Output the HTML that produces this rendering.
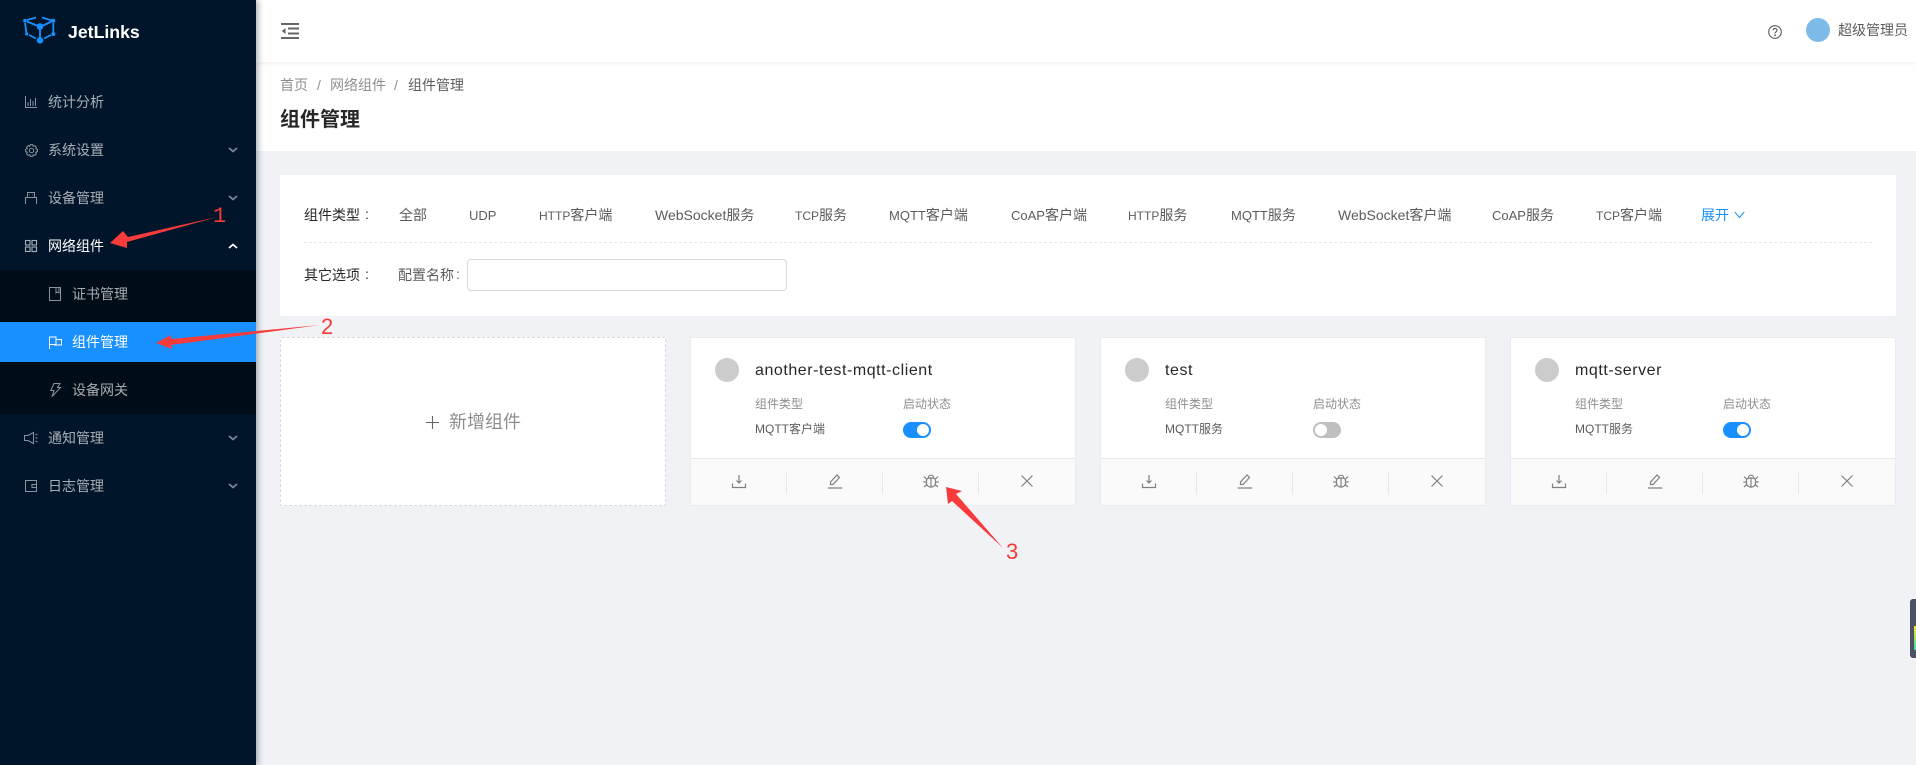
<!DOCTYPE html>
<html lang="zh-CN"><head><meta charset="utf-8"><title>JetLinks</title>
<style>
*{box-sizing:border-box}
html,body{margin:0;padding:0;width:1916px;height:765px;overflow:hidden;background:#f0f2f5;font-family:"Liberation Sans","Noto Sans CJK SC",sans-serif;font-size:14px;color:rgba(0,0,0,.65)}
.a{position:absolute}
.t{position:absolute;white-space:nowrap;line-height:20px;height:20px}
#side{position:absolute;left:0;top:0;width:256px;height:765px;background:#001529;box-shadow:2px 0 6px rgba(0,21,41,.35);z-index:3}
#side .t{color:rgba(255,255,255,.65)}
#side svg{position:absolute;overflow:visible}
.card{position:absolute;top:337px;width:386px;height:169px;background:#fff;border:1px solid #ececec;border-radius:2px}
.av{position:absolute;left:24px;top:20px;width:24px;height:24px;border-radius:50%;background:#ccc}
.name{position:absolute;left:64px;top:22px;font-size:16px;line-height:22px;letter-spacing:.55px;color:rgba(0,0,0,.85);white-space:nowrap}
.lb{position:absolute;top:56px;font-size:12px;line-height:20px;color:rgba(0,0,0,.45);white-space:nowrap}
.val{position:absolute;left:64px;top:81px;font-size:12px;line-height:20px;color:rgba(0,0,0,.65);white-space:nowrap}
.sw{position:absolute;left:212px;top:84px;width:28px;height:16px;border-radius:8px;background:#1890ff}
.sw:after{content:"";position:absolute;left:14px;top:2px;width:12px;height:12px;border-radius:50%;background:#fff}
.sw.off{background:#bfbfbf}.sw.off:after{left:2px}
.bar{position:absolute;left:0;right:0;bottom:0;height:47px;background:#fafafa;border-top:1px solid #e8e8e8}
.bar i{position:absolute;top:12px;width:1px;height:23px;background:#e8e8e8}
.bar svg{position:absolute;top:14px;width:16px;height:16px;fill:none;stroke:#808080;stroke-width:1.2}
.f{color:rgba(0,0,0,.65);font-size:14px;top:205px}
.f span{font-size:13px}
.f span.s12{font-size:12px}
.f span.s14{font-size:14px}
.l{color:rgba(0,0,0,.85);font-size:14px}
</style></head><body>

<div id="side">
  <svg style="left:0;top:0" width="60" height="48" viewBox="0 0 60 48" fill="none" stroke="#1890ff" stroke-width="1.8">
    <path d="M27 20L36 17.500M42 17.500L52 20.500M53.300 23V32M51 35L44 38.500M36 38.500L29 35M25 23L26.500 33M27 21.500L38 26M51.500 21.500L42 26M40 27V38"/>
    <g fill="#1890ff" stroke="none"><circle cx="40" cy="26.500" r="3.300"/><circle cx="40" cy="40.300" r="3.300"/><circle cx="53.300" cy="20.700" r="2"/><circle cx="25" cy="20.700" r="1.800"/><circle cx="53.300" cy="34" r="2"/><circle cx="26.700" cy="34" r="1.600"/></g>
  </svg>
  <div class="t" style="left:68px;top:21px;font-size:17.700px;line-height:22px;height:22px;color:#fff;font-weight:700">JetLinks</div>

  <svg style="left:25px;top:96px" width="12" height="12" viewBox="0 0 12 12" fill="none" stroke="#8b949e"><path d="M.5 0V11.500H12M3 10V6M5.500 10V3M8 10V5M10.500 10V2"/></svg>
  <div class="t" style="left:48px;top:92px">统计分析</div>

  <svg style="left:25px;top:144px" width="13" height="13" viewBox="0 0 13 13" fill="none" stroke="#8b949e"><circle cx="6.500" cy="6.500" r="2.200"/><path d="M5.300.6H7.700L8.200 2.300 9.800 1.600 11.400 3.200 10.700 4.800 12.400 5.300V7.700L10.700 8.200 11.400 9.800 9.800 11.400 8.200 10.700 7.700 12.400H5.300L4.800 10.700 3.200 11.400 1.600 9.800 2.300 8.200.6 7.700V5.300L2.300 4.800 1.600 3.200 3.200 1.600 4.800 2.300Z"/></svg>
  <div class="t" style="left:48px;top:140px">系统设置</div>
  <svg style="left:228px;top:147px" width="10" height="6" viewBox="0 0 10 6" fill="none" stroke="#7f8a96" stroke-width="1.700"><path d="M1 1L5 4.500 9 1"/></svg>

  <svg style="left:25px;top:192px" width="12" height="12" viewBox="0 0 12 12" fill="none" stroke="#8b949e"><path d="M2.500 5.500V.5H9.500V5.500M.5 12V5.500H11.500V12M4.500 2.500V3M7.500 2.500V3"/></svg>
  <div class="t" style="left:48px;top:188px">设备管理</div>
  <svg style="left:228px;top:195px" width="10" height="6" viewBox="0 0 10 6" fill="none" stroke="#7f8a96" stroke-width="1.700"><path d="M1 1L5 4.500 9 1"/></svg>

  <svg style="left:25px;top:240px" width="12" height="12" viewBox="0 0 12 12" fill="none" stroke="#a9b0b7" stroke-width="1.100"><rect x=".5" y=".5" width="4.500" height="4.500"/><rect x="7" y=".5" width="4.500" height="4.500"/><rect x=".5" y="7" width="4.500" height="4.500"/><rect x="7" y="7" width="4.500" height="4.500"/></svg>
  <div class="t" style="left:48px;top:236px;color:#fff">网络组件</div>
  <svg style="left:228px;top:243px" width="10" height="6" viewBox="0 0 10 6" fill="none" stroke="#fff" stroke-width="1.700"><path d="M1 5L5 1.500 9 5"/></svg>

  <div class="a" style="left:0;top:270px;width:256px;height:144px;background:#000c17"></div>
  <svg style="left:49px;top:287px" width="12" height="14" viewBox="0 0 12 14" fill="none" stroke="#8b949e"><path d="M.5.5H11.500V13.500H.5ZM7 .5V6L8.500 5 10 6V.5"/></svg>
  <div class="t" style="left:72px;top:284px">证书管理</div>
  <div class="a" style="left:0;top:322px;width:256px;height:40px;background:#1890ff"></div>
  <svg style="left:49px;top:336px" width="13" height="13" viewBox="0 0 13 13" fill="none" stroke="#fff"><path d="M.5 13V1H7V8.500H.5M7 3.500H12.500V9H5"/></svg>
  <div class="t" style="left:72px;top:332px;color:#fff">组件管理</div>
  <svg style="left:50px;top:383px" width="11" height="14" viewBox="0 0 11 14" fill="none" stroke="#8b949e"><path d="M4 .5H10L7.500 4.500H10.500L2 13.500 4 7.500H.8Z"/></svg>
  <div class="t" style="left:72px;top:380px">设备网关</div>

  <svg style="left:24px;top:432px" width="14" height="12" viewBox="0 0 14 12" fill="none" stroke="#8b949e"><path d="M9.500.5V11.500L4 8.500H.5V3.500H4ZM11.500 3L13.500 2M11.500 6H13.500M11.500 9L13.500 10"/></svg>
  <div class="t" style="left:48px;top:428px">通知管理</div>
  <svg style="left:228px;top:435px" width="10" height="6" viewBox="0 0 10 6" fill="none" stroke="#7f8a96" stroke-width="1.700"><path d="M1 1L5 4.500 9 1"/></svg>

  <svg style="left:25px;top:480px" width="12" height="12" viewBox="0 0 12 12" fill="none" stroke="#8b949e"><path d="M.5.5H11.500V11.500H.5ZM11.500 4.500H7V7.500H11.500"/></svg>
  <div class="t" style="left:48px;top:476px">日志管理</div>
  <svg style="left:228px;top:483px" width="10" height="6" viewBox="0 0 10 6" fill="none" stroke="#7f8a96" stroke-width="1.700"><path d="M1 1L5 4.500 9 1"/></svg>
</div>

<div class="a" style="left:256px;top:0;width:1660px;height:151px;background:#fff"></div>
<div class="a" style="left:256px;top:0;width:1660px;height:62px;background:#fff;box-shadow:0 1px 4px rgba(0,21,41,.08)"></div>

<svg class="a" style="left:281px;top:23px" width="18" height="16" viewBox="0 0 18 16"><g fill="#666"><rect width="18" height="2"/><rect y="14" width="18" height="2"/><rect x="7" y="4.500" width="11" height="2"/><rect x="7" y="9.500" width="11" height="2"/><path d="M4.500 5V11L.8 8Z"/></g></svg>

<svg class="a" style="left:1768px;top:25px" width="14" height="14" viewBox="0 0 14 14" fill="none" stroke="#595959" stroke-width="1.100"><circle cx="7" cy="7" r="6.300"/><path d="M5 5.400C5 2.800 9 2.800 9 5.400 9 6.800 7 6.800 7 8.500"/><circle cx="7" cy="10.300" r=".4"/></svg>
<div class="a" style="left:1806px;top:18px;width:24px;height:24px;border-radius:50%;background:#7dbbe8"></div>
<div class="t" style="left:1838px;top:20px">超级管理员</div>

<div class="t" style="left:280px;top:75px;color:rgba(0,0,0,.45)">首页</div>
<div class="t" style="left:317px;top:75px;color:rgba(0,0,0,.45)">/</div>
<div class="t" style="left:330px;top:75px;color:rgba(0,0,0,.45)">网络组件</div>
<div class="t" style="left:394px;top:75px;color:rgba(0,0,0,.45)">/</div>
<div class="t" style="left:408px;top:75px;color:rgba(0,0,0,.65)">组件管理</div>
<div class="t" style="left:280px;top:107px;font-size:20px;line-height:26px;height:26px;font-weight:600;color:rgba(0,0,0,.85)">组件管理</div>

<div class="a" style="left:280px;top:175px;width:1616px;height:141px;background:#fff;border-radius:2px"></div>
<div class="t l" style="left:304px;top:205px">组件类型</div><div class="t l" style="left:365px;top:204px">:</div>
<div class="t f" style="left:399px">全部</div>
<div class="t f" style="left:469px"><span>UDP</span></div>
<div class="t f" style="left:539px"><span class="s12">HTTP</span>客户端</div>
<div class="t f" style="left:655px"><span class="s14">WebSocket</span>服务</div>
<div class="t f" style="left:795px"><span class="s12">TCP</span>服务</div>
<div class="t f" style="left:889px"><span>MQTT</span>客户端</div>
<div class="t f" style="left:1011px"><span>CoAP</span>客户端</div>
<div class="t f" style="left:1128px"><span class="s12">HTTP</span>服务</div>
<div class="t f" style="left:1231px"><span>MQTT</span>服务</div>
<div class="t f" style="left:1338px"><span class="s14">WebSocket</span>客户端</div>
<div class="t f" style="left:1492px"><span>CoAP</span>服务</div>
<div class="t f" style="left:1596px"><span class="s12">TCP</span>客户端</div>
<div class="t" style="left:1701px;top:205px;color:#1890ff;font-size:14px">展开</div>
<svg class="a" style="left:1734px;top:211px" width="11" height="8" viewBox="0 0 11 8" fill="none" stroke="#1890ff"><path d="M.8 1L5.500 6.500 10.200 1"/></svg>
<div class="a" style="left:304px;top:242px;width:1568px;border-top:1px dashed #e8e8e8"></div>
<div class="t l" style="left:304px;top:265px">其它选项</div><div class="t l" style="left:365px;top:264px">:</div>
<div class="t f" style="left:398px;top:265px">配置名称</div><div class="t f" style="left:456px;top:264px">:</div>
<div class="a" style="left:467px;top:259px;width:320px;height:32px;background:#fff;border:1px solid #d9d9d9;border-radius:4px"></div>

<div class="a" style="left:280px;top:337px;width:386px;height:169px;background:#fff;border:1px dashed #d9d9d9;border-radius:2px"></div>
<svg class="a" style="left:425px;top:415px" width="15" height="15" viewBox="0 0 15 15" stroke="#666" stroke-width="1.100"><path d="M7.500 1V14M1 7.500H14"/></svg>
<div class="t" style="left:449px;top:410px;font-size:18px;line-height:24px;height:24px;color:rgba(0,0,0,.45)">新增组件</div>

<div class="card" style="left:690px">
  <div class="av"></div><div class="name">another-test-mqtt-client</div>
  <div class="lb" style="left:64px">组件类型</div><div class="lb" style="left:212px">启动状态</div>
  <div class="val">MQTT客户端</div><div class="sw"></div>
  <div class="bar"><i style="left:95px"></i><i style="left:191px"></i><i style="left:287px"></i>
    <svg style="left:40px" viewBox="0 0 16 16"><path d="M8 2V10M5.500 7.500L8 10 10.500 7.500M1.500 10.500V14.500H14.500V10.500"/></svg>
    <svg style="left:136px" viewBox="0 0 16 16"><path d="M.8 15H15.200M3.500 11.500V9L10 2 12.500 4.500 6 11.500Z"/></svg>
    <svg style="left:232px" viewBox="0 0 16 16"><path d="M3.500 7.500C3.500 5.500 5 5 8 5S12.500 5.500 12.500 7.500V10C12.500 15.500 3.500 15.500 3.500 10ZM5.200 5.200C5.200 1.200 10.800 1.200 10.800 5.200M8 5V14M3.500 9H.3M12.500 9H15.700M3.800 11.500L1 14M12.200 11.500L15 14M1 3.500L3.800 6.300M15 3.500L12.200 6.300"/></svg>
    <svg style="left:328px" viewBox="0 0 16 16"><path d="M2.500 2.500L13.500 13.500M13.500 2.500L2.500 13.500"/></svg>
  </div>
</div>

<div class="card" style="left:1100px">
  <div class="av"></div><div class="name">test</div>
  <div class="lb" style="left:64px">组件类型</div><div class="lb" style="left:212px">启动状态</div>
  <div class="val">MQTT服务</div><div class="sw off"></div>
  <div class="bar"><i style="left:95px"></i><i style="left:191px"></i><i style="left:287px"></i>
    <svg style="left:40px" viewBox="0 0 16 16"><path d="M8 2V10M5.500 7.500L8 10 10.500 7.500M1.500 10.500V14.500H14.500V10.500"/></svg>
    <svg style="left:136px" viewBox="0 0 16 16"><path d="M.8 15H15.200M3.500 11.500V9L10 2 12.500 4.500 6 11.500Z"/></svg>
    <svg style="left:232px" viewBox="0 0 16 16"><path d="M3.500 7.500C3.500 5.500 5 5 8 5S12.500 5.500 12.500 7.500V10C12.500 15.500 3.500 15.500 3.500 10ZM5.200 5.200C5.200 1.200 10.800 1.200 10.800 5.200M8 5V14M3.500 9H.3M12.500 9H15.700M3.800 11.500L1 14M12.200 11.500L15 14M1 3.500L3.800 6.300M15 3.500L12.200 6.300"/></svg>
    <svg style="left:328px" viewBox="0 0 16 16"><path d="M2.500 2.500L13.500 13.500M13.500 2.500L2.500 13.500"/></svg>
  </div>
</div>

<div class="card" style="left:1510px">
  <div class="av"></div><div class="name">mqtt-server</div>
  <div class="lb" style="left:64px">组件类型</div><div class="lb" style="left:212px">启动状态</div>
  <div class="val">MQTT服务</div><div class="sw"></div>
  <div class="bar"><i style="left:95px"></i><i style="left:191px"></i><i style="left:287px"></i>
    <svg style="left:40px" viewBox="0 0 16 16"><path d="M8 2V10M5.500 7.500L8 10 10.500 7.500M1.500 10.500V14.500H14.500V10.500"/></svg>
    <svg style="left:136px" viewBox="0 0 16 16"><path d="M.8 15H15.200M3.500 11.500V9L10 2 12.500 4.500 6 11.500Z"/></svg>
    <svg style="left:232px" viewBox="0 0 16 16"><path d="M3.500 7.500C3.500 5.500 5 5 8 5S12.500 5.500 12.500 7.500V10C12.500 15.500 3.500 15.500 3.500 10ZM5.200 5.200C5.200 1.200 10.800 1.200 10.800 5.200M8 5V14M3.500 9H.3M12.500 9H15.700M3.800 11.500L1 14M12.200 11.500L15 14M1 3.500L3.800 6.300M15 3.500L12.200 6.300"/></svg>
    <svg style="left:328px" viewBox="0 0 16 16"><path d="M2.500 2.500L13.500 13.500M13.500 2.500L2.500 13.500"/></svg>
  </div>
</div>

<div class="a" style="left:1910px;top:599px;width:6px;height:59px;background:#4b5261;border-radius:3px 0 0 3px;overflow:hidden">
  <div class="a" style="left:4px;top:27px;width:2px;height:24px;background:linear-gradient(#f5e642,#a8e060 45%,#36e0b0)"></div>
</div>

<svg class="a" style="left:0;top:0;z-index:5" width="1916" height="765" viewBox="0 0 1916 765">
  <g fill="#f73b3b">
    <path d="M110 243L123 231 128 237 217 217 127 242 127 248Z"/>
    <path d="M156 343L171 335 171 339 320 325 171 345 172 349Z"/>
    <path d="M946 487L962 491 956 494 1003 548 952 501 948 504Z"/>
  </g>
  <g fill="#f73b3b" font-size="22">
    <text x="213" y="222" font-family="Liberation Mono,monospace">1</text>
    <text x="321" y="334" font-family="Liberation Sans,sans-serif">2</text>
    <text x="1006" y="559" font-family="Liberation Sans,sans-serif">3</text>
  </g>
</svg>
</body></html>
